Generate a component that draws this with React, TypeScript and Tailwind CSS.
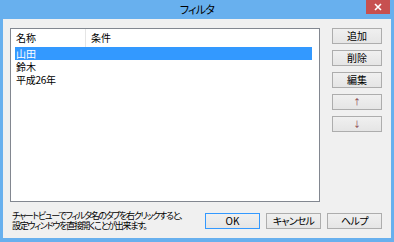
import React from "react";

const Btn = ({ children, cls = "" }: { children: React.ReactNode; cls?: string }) => (
  <div
    className={`h-[16px] flex items-center justify-center border bg-[linear-gradient(#f0f0f0,#e5e5e5)] text-[10px] leading-none text-black whitespace-nowrap ${cls}`}
  >
    {children}
  </div>
);

export default function App() {
  return (
    <div className="w-[394px] h-[242px] bg-[#68b0ee] flex flex-col font-['Noto_Sans_CJK_JP',sans-serif] [font-feature-settings:'palt'] overflow-hidden">
      {/* title bar */}
      <div className="h-[19px] flex items-start">
        <div className="flex-1" />
        <div className="h-[19px] flex items-center text-[11px] leading-none text-black tracking-[-0.8px]">フィルタ</div>
        <div className="flex-1 flex justify-end">
          <div className="w-[24px] h-[14px] mr-[4px] bg-[#c75050] flex items-center justify-center">
            <svg width="8" height="8" viewBox="0 0 8 8">
              <path d="M1 1L7 7M7 1L1 7" stroke="white" strokeWidth="1.6" />
            </svg>
          </div>
        </div>
      </div>
      {/* content */}
      <div className="flex-1 mx-[3px] mb-[4px] bg-[#f0f0f0] pt-[9px] pl-[7px] pr-[9px] flex flex-col">
        <div className="flex gap-[12px]">
          <div className="w-[310px] h-[174px] border border-[#828790] bg-white flex flex-col">
            <div className="h-[18px] flex text-[10px] leading-[12px] text-black">
              <div className="w-[75px] flex items-center pl-[5px] border-r border-[#e5e5e5]">名称</div>
              <div className="flex items-center pl-[5px]">条件</div>
            </div>
            <div className="flex flex-col pl-[4px] text-[10px] leading-[12px] text-black">
              <div className="w-[297px] h-[13px] bg-[#3399ff] text-white flex items-center pl-[1px]">山田</div>
              <div className="h-[13px] flex items-center pl-[1px]">鈴木</div>
              <div className="h-[13px] flex items-center pl-[1px] tracking-[-0.3px]">平成26年</div>
            </div>
          </div>
          <div className="w-[50px] flex flex-col gap-[6px]">
            <Btn cls="border-[#adadad]">追加</Btn>
            <Btn cls="border-[#adadad]">削除</Btn>
            <Btn cls="border-[#adadad]">編集</Btn>
            <Btn cls="border-[#adadad]"><span className="text-[8px] text-[#803040]">↑</span></Btn>
            <Btn cls="border-[#adadad]"><span className="text-[8px] text-[#803040]">↓</span></Btn>
          </div>
        </div>
        <div className="flex items-center mt-[9px]">
          <div className="pl-[2px] text-[9px] leading-[10px] text-black tracking-[-1.3px] whitespace-nowrap">
            <div>チャートビューでフィルタ名のタブを右クリックすると、</div>
            <div>設定ウィンドウを直接開くことが出来ます。</div>
          </div>
          <div className="ml-auto flex gap-[6px]">
            <Btn cls="w-[55px] border-[#3399ff]">OK</Btn>
            <Btn cls="w-[55px] border-[#adadad] tracking-[-0.8px]">キャンセル</Btn>
            <Btn cls="w-[55px] border-[#adadad] tracking-[-0.5px]">ヘルプ</Btn>
          </div>
        </div>
      </div>
    </div>
  );
}
